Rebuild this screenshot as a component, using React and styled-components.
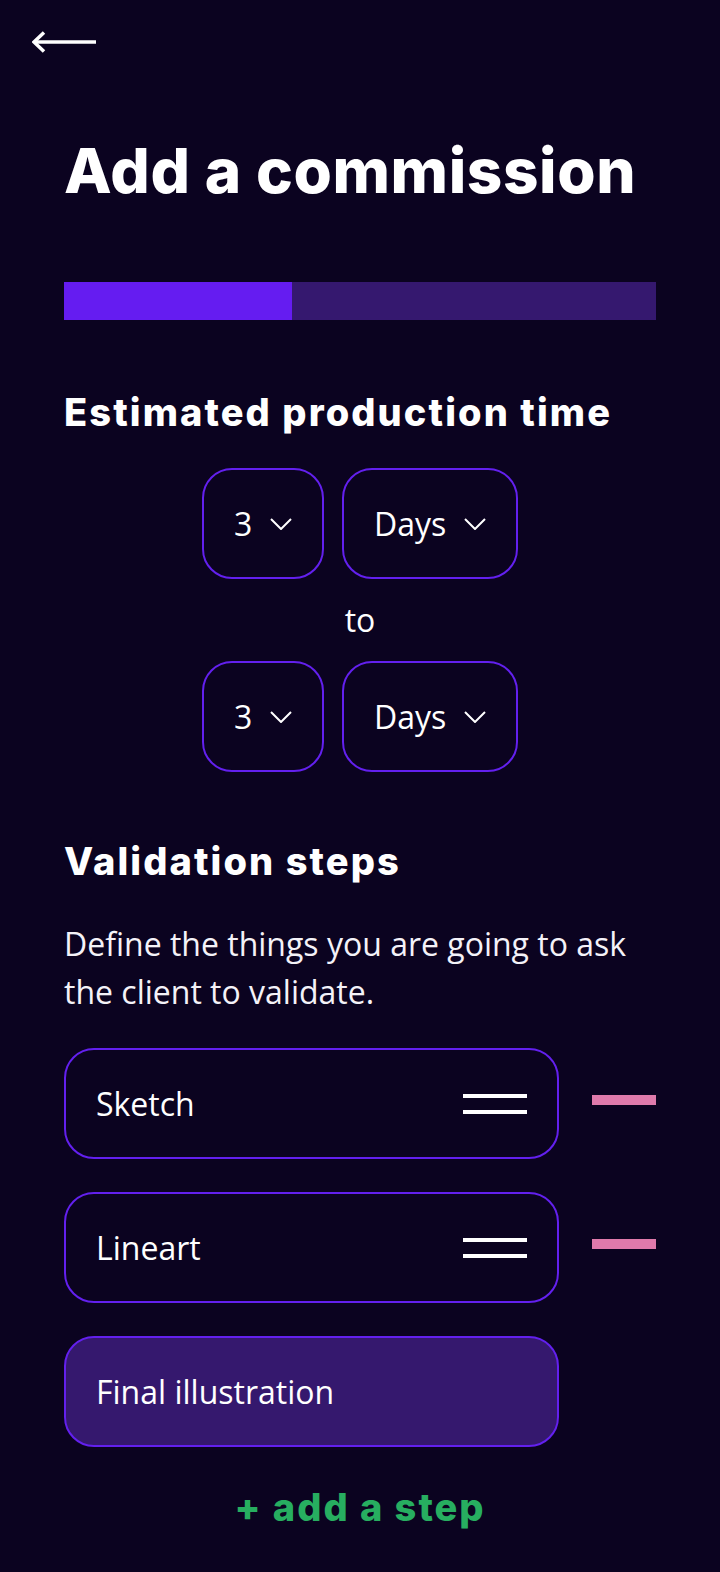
import React from 'react';
import styled, { createGlobalStyle } from 'styled-components';

const GlobalStyle = createGlobalStyle`
  html, body {
    margin: 0;
    padding: 0;
    background: #0b0320;
  }
  body {
    min-height: 100vh;
    font-family: "Open Sans", "Noto Sans", sans-serif;
    color: #fff;
  }
  * { box-sizing: border-box; }
`;

const Page = styled.div`
  width: 720px;
  min-height: 1572px;
  background: #0b0320;
  padding-bottom: 40px;
`;

const TopBar = styled.div`
  height: 84px;
  padding-left: 32px;
  display: flex;
  align-items: center;
`;

const BackButton = styled.button`
  background: none;
  border: none;
  padding: 0;
  display: flex;
  cursor: pointer;
`;

const Content = styled.div`
  padding: 0 64px;
  display: flex;
  flex-direction: column;
`;

const Title = styled.h1`
  margin: 56px 0 0;
  font-family: "Inter", "DejaVu Sans", sans-serif;
  font-weight: 800;
  font-size: 62px;
  line-height: 62px;
  letter-spacing: 0.6px;
  color: #fff;
`;

const Progress = styled.div`
  margin-top: 80px;
  height: 38px;
  background: #35186f;
`;

const ProgressFill = styled.div`
  height: 100%;
  background: #651cf1;
`;

const SectionTitle = styled.h2`
  margin: ${p => p.$top}px 0 0;
  font-family: "Inter", "DejaVu Sans", sans-serif;
  font-weight: 800;
  font-size: 38px;
  line-height: 38px;
  letter-spacing: 2.1px;
  color: #fff;
`;

const TimeBlock = styled.div`
  margin-top: 37px;
  display: flex;
  flex-direction: column;
  align-items: center;
  gap: 17px;
`;

const SelectRow = styled.div`
  display: flex;
  gap: 18px;
`;

const Select = styled.div`
  width: ${p => p.$width}px;
  height: 111px;
  border: 2px solid #6320ee;
  border-radius: 30px;
  display: flex;
  align-items: center;
  justify-content: space-between;
  padding: 0 30px;
  font-size: 32px;
  line-height: 48px;
`;

const ToLabel = styled.div`
  font-size: 32px;
  line-height: 48px;
`;

const Description = styled.p`
  margin: 40px 0 0;
  font-size: 32px;
  line-height: 48px;
  color: #f4f2f8;
`;

const Steps = styled.div`
  margin-top: 32px;
  display: flex;
  flex-direction: column;
  gap: 33px;
`;

const StepRow = styled.div`
  display: flex;
  align-items: center;
  gap: 33px;
`;

const StepBox = styled.div`
  width: 495px;
  height: 111px;
  border: 2px solid #6320ee;
  border-radius: 30px;
  background: ${p => (p.$active ? '#35186e' : 'transparent')};
  display: flex;
  align-items: center;
  justify-content: space-between;
  padding: 0 30px;
  font-size: 32px;
  line-height: 48px;
`;

const Handle = styled.div`
  width: 64px;
  display: flex;
  flex-direction: column;
  gap: 12px;
  & > span {
    display: block;
    height: 4px;
    background: #fff;
  }
`;

const RemoveButton = styled.button`
  width: 64px;
  height: 10px;
  margin-bottom: 8px;
  padding: 0;
  border: none;
  background: #df7aab;
  cursor: pointer;
`;

const AddStep = styled.button`
  margin-top: 41px;
  align-self: center;
  background: none;
  border: none;
  padding: 0;
  font-family: "Inter", "DejaVu Sans", sans-serif;
  font-weight: 800;
  font-size: 38px;
  line-height: 38px;
  letter-spacing: 2px;
  color: #27ae60;
  cursor: pointer;
`;

const Chevron = () => (
  <svg width="22" height="12" viewBox="0 0 22 12" fill="none">
    <polyline points="1,1 11,11 21,1" stroke="#fff" strokeWidth="2" />
  </svg>
);

const BackArrow = () => (
  <svg width="64" height="22" viewBox="0 0 64 22" fill="none">
    <line x1="3" y1="11" x2="64" y2="11" stroke="#fff" strokeWidth="3.5" />
    <polyline points="12,1.5 2,11 12,20.5" stroke="#fff" strokeWidth="3.5" strokeLinejoin="miter" />
  </svg>
);

const steps = [
  { label: 'Sketch', removable: true },
  { label: 'Lineart', removable: true },
  { label: 'Final illustration', active: true },
];

export default function App() {
  return (
    <Page>
      <GlobalStyle />
      <TopBar>
        <BackButton aria-label="Back">
          <BackArrow />
        </BackButton>
      </TopBar>
      <Content>
        <Title>Add a commission</Title>
        <Progress>
          <ProgressFill style={{ width: `${(228 / 592) * 100}%` }} />
        </Progress>

        <SectionTitle $top={73}>Estimated production time</SectionTitle>
        <TimeBlock>
          <SelectRow>
            <Select $width={122}>3 <Chevron /></Select>
            <Select $width={176}>Days <Chevron /></Select>
          </SelectRow>
          <ToLabel>to</ToLabel>
          <SelectRow>
            <Select $width={122}>3 <Chevron /></Select>
            <Select $width={176}>Days <Chevron /></Select>
          </SelectRow>
        </TimeBlock>

        <SectionTitle $top={70}>Validation steps</SectionTitle>
        <Description>
          Define the things you are going to ask the client to validate.
        </Description>

        <Steps>
          {steps.map(s => (
            <StepRow key={s.label}>
              <StepBox $active={s.active}>
                {s.label}
                {!s.active && (
                  <Handle>
                    <span />
                    <span />
                  </Handle>
                )}
              </StepBox>
              {s.removable && <RemoveButton aria-label="Remove step" />}
            </StepRow>
          ))}
        </Steps>

        <AddStep>+ add a step</AddStep>
      </Content>
    </Page>
  );
}
